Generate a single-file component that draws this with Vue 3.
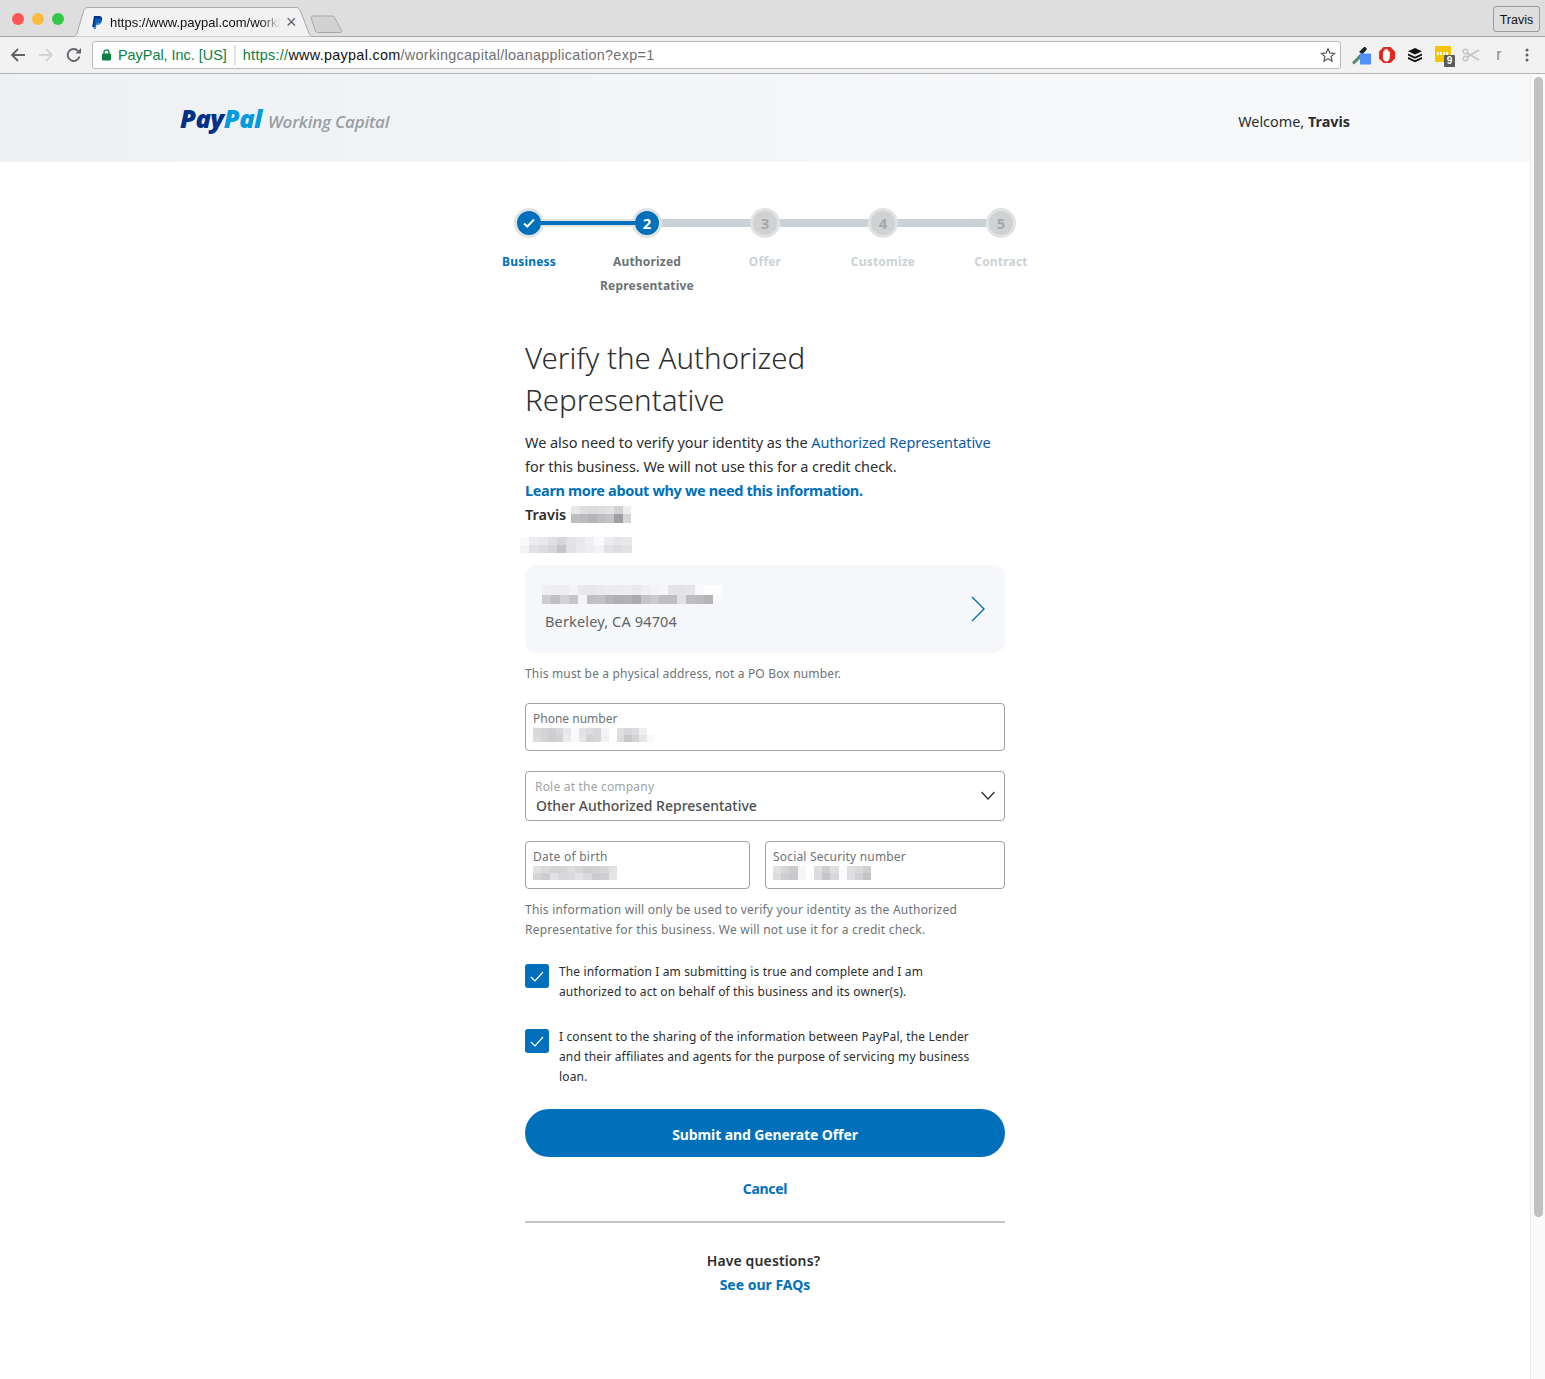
<script setup>
const steps = [
  { label: 'Business', state: 'done' },
  { label: 'Authorized Representative', state: 'current' },
  { label: 'Offer', n: 3, state: 'todo' },
  { label: 'Customize', n: 4, state: 'todo' },
  { label: 'Contract', n: 5, state: 'todo' }
]
const g = (v) => `rgb(${v},${v},${v + 2})`
const blurs = {
  surname: { w: 8.6, h: 8.5, rows: [[232,222,218,222,226,210,238],[190,186,180,190,196,160,214]] },
  email: { w: 9.3, h: 8, rows: [[250,236,232,224,214,226,232,240,250,236,230,232],[244,226,220,214,198,226,234,238,244,226,222,226]] },
  address: { w: 9, h: 9.5, rows: [[240,238,238,244,232,232,234,236,236,238,234,240,244,246,228,228,230,250,254,254],[206,192,210,198,244,192,194,182,176,178,170,196,202,190,190,226,190,188,180,250]] },
  phone: { w: 7.6, h: 7, rows: [[216,212,208,216,232,250,226,220,214,244,255,224,214,222,240],[220,212,206,210,236,250,230,210,214,240,255,220,200,212,230,250]] },
  dob: { w: 8.4, h: 7, rows: [[226,218,212,212,222,214,206,210,214,226],[214,206,226,216,218,226,218,204,206,228]] },
  ssn: { w: 8.2, h: 7, rows: [[226,214,204,246,255,222,206,224,252,224,218,208],[220,206,200,246,255,220,198,216,252,222,210,196]] }
}
const cell = (b, v) => ({ width: b.w + 'px', height: b.h + 'px', background: g(v) })
</script>

<template>
  <div class="root">
    <div class="titlebar">
      <div class="lights">
        <i class="light red"></i><i class="light yellow"></i><i class="light green"></i>
      </div>
      <div class="tab">
        <svg class="tab-shape" width="242" height="30" viewBox="0 0 242 30">
          <path d="M0 29.500h1c2 0 3-1 4-3L11.500 4c.7-2 2-3.500 4.500-3.500h208c2.500 0 3.800 1.500 4.500 3.500l8.500 22.500c1 2 2 3 4 3h1" fill="#f2f2f2" stroke="#a8a8a8"/>
        </svg>
        <svg class="favicon" width="12" height="13" viewBox="0 0 12 13">
          <path d="M3 0h5c2.500 0 3.500 1.500 3 3.800C10.500 6 9 7.200 6.800 7.200H5.200L4.400 11H1.200z" fill="#003087"/>
          <path d="M4.500 2.500h4.800c1.500.8 1.600 2.200 1.300 3.400-.5 2-2 3-4 3H5.500L4.800 13H2.400z" fill="#0a6fc2" opacity=".75"/>
        </svg>
        <span class="tab-title">https://www.paypal.com/worki</span>
        <span class="tab-x">×</span>
      </div>
      <svg class="newtab" width="36" height="20" viewBox="0 0 36 20">
        <path d="M2 2.500c0-1 .5-1.500 1.500-1.500h20c1 0 1.500.5 2 1.500l7 13c.5 1 0 2-1 2h-23c-1 0-1.500-.5-2-1.500z" fill="#d2d2d2" stroke="#a8a8a8"/>
      </svg>
      <div class="profile">Travis</div>
    </div>

    <div class="toolbar">
      <svg class="nav" width="16" height="16" viewBox="0 0 16 16"><path d="M15 8H2M8 2 2 8l6 6" fill="none" stroke="#5f6368" stroke-width="1.800"/></svg>
      <svg class="nav fwd" width="16" height="16" viewBox="0 0 16 16"><path d="M1 8h13M8 2l6 6-6 6" fill="none" stroke="#d3d3d3" stroke-width="1.800"/></svg>
      <svg class="nav reload" width="16" height="16" viewBox="0 0 16 16"><path d="M13.500 9.500A6 6 0 1 1 12 3.800" fill="none" stroke="#5f6368" stroke-width="1.800"/><path d="M9.500 6.500H15V1z" fill="#5f6368"/></svg>
      <div class="omnibox">
        <svg class="lock" width="9" height="12" viewBox="0 0 9 12"><path d="M2 5V3.300a2.500 2.500 0 0 1 5 0V5" fill="none" stroke="#0b8043" stroke-width="1.300"/><rect y="4.500" width="9" height="7" rx="1" fill="#0b8043"/></svg>
        <span class="ev">PayPal, Inc. [US]</span>
        <span class="sep"></span>
        <span class="url"><span class="ev">https://</span><span class="host">www.paypal.com</span>/workingcapital/loanapplication?exp=1</span>
        <svg class="star" width="16" height="16" viewBox="0 0 16 16"><path d="M8 1.800l1.900 4.200 4.600.5-3.400 3.100.9 4.500L8 11.800l-4 2.300.9-4.500-3.400-3.100 4.600-.5z" fill="none" stroke="#5f6368" stroke-width="1.300"/></svg>
      </div>
      <div class="exts">
        <svg width="20" height="20" viewBox="0 0 20 20"><path d="M0 17.500 8 9l2.500 2.500L2 19.500z" fill="#5b8a6c"/><path d="M7 6.500l3 3 3.500-3.500 1-1c1-1.500-1.500-4-3-2.500L8 6z" fill="#1d2426"/><rect x="8" y="8.500" width="11" height="11" fill="#4d90fe"/></svg>
        <svg width="18" height="18" viewBox="0 0 18 18"><path d="M5.500 1h7L17 5.500v7L12.500 17h-7L1 12.500v-7z" fill="#e02b20"/><path d="M5 6c0-1 1.200-1 1.300 0V4.200c0-1 1.300-1 1.300 0V3.500c0-1 1.400-1 1.400 0v.7c0-1 1.300-1 1.300 0V6c0-1 1.500-1 1.500 0v5c0 2.500-1.500 4.500-3.500 4.500S5 13.500 5 11z" fill="#fff"/></svg>
        <svg width="16" height="16" viewBox="0 0 16 16"><path d="M8 1l7 3.200-7 3.200-7-3.200z" fill="#111"/><path d="M1 6.500l7 3.200 7-3.200v2L8 11.700 1 8.500zM1 10l7 3.200 7-3.200v2l-7 3.200L1 12z" fill="#111"/></svg>
        <span class="yellow-ext"><span class="dots"><i></i><i></i><i></i><i></i></span><span class="badge">9</span></span>
        <svg width="18" height="16" viewBox="0 0 18 16"><path d="M5 10 17 3M5 6l12 7" stroke="#c4c4c4" stroke-width="1.800" fill="none"/><circle cx="3.500" cy="4.500" r="2.300" fill="none" stroke="#c4c4c4" stroke-width="1.500"/><circle cx="3.500" cy="11.500" r="2.300" fill="none" stroke="#c4c4c4" stroke-width="1.500"/></svg>
        <span class="ext-r">r</span>
        <svg width="4" height="14" viewBox="0 0 4 14"><circle cx="2" cy="2" r="1.500" fill="#5f6368"/><circle cx="2" cy="7" r="1.500" fill="#5f6368"/><circle cx="2" cy="12" r="1.500" fill="#5f6368"/></svg>
      </div>
    </div>

    <div class="viewport">
      <main class="page">
        <header class="hero">
          <div class="logo"><span class="pay">Pay</span><span class="pal">Pal</span><span class="wc">Working Capital</span></div>
          <div class="welcome">Welcome, <b>Travis</b></div>
        </header>

        <div class="stepper">
          <div class="track"><div class="track-done"></div></div>
          <div v-for="s in steps" :key="s.label" class="step" :class="s.state">
            <div class="circle">
              <svg v-if="s.state === 'done'" width="12" height="10" viewBox="0 0 12 10"><path d="M1 5.500 4.300 8.500 11 1.500" fill="none" stroke="#fff" stroke-width="2"/></svg>
              <template v-else-if="s.state === 'current'">2</template>
              <template v-else>{{ s.n }}</template>
            </div>
            <div class="step-label">{{ s.label }}</div>
          </div>
        </div>

        <section class="form">
          <h1>Verify the Authorized Representative</h1>
          <p class="lead">We also need to verify your identity as the <a class="lnk">Authorized Representative</a> for this business. We will not use this for a credit check.</p>
          <p class="lead"><a class="lnk strong learn">Learn more about why we need this information.</a></p>
          <div class="name"><b>Travis</b>
            <span class="blur"><span v-for="(r, i) in blurs.surname.rows" :key="i" class="blur-row"><i v-for="(v, j) in r" :key="j" :style="cell(blurs.surname, v)"></i></span></span>
          </div>
          <div class="email-row">
            <span class="blur"><span v-for="(r, i) in blurs.email.rows" :key="i" class="blur-row"><i v-for="(v, j) in r" :key="j" :style="cell(blurs.email, v)"></i></span></span>
          </div>

          <div class="addr">
            <div>
              <span class="blur addr-blur"><span v-for="(r, i) in blurs.address.rows" :key="i" class="blur-row"><i v-for="(v, j) in r" :key="j" :style="cell(blurs.address, v)"></i></span></span>
              <div class="city">Berkeley, CA 94704</div>
            </div>
            <svg width="16" height="26" viewBox="0 0 16 26"><path d="M2 1l12 12L2 25" fill="none" stroke="#0070ba" stroke-width="1.400"/></svg>
          </div>
          <p class="note po">This must be a physical address, not a PO Box number.</p>

          <div class="field phone">
            <label>Phone number</label>
            <span class="blur"><span v-for="(r, i) in blurs.phone.rows" :key="i" class="blur-row"><i v-for="(v, j) in r" :key="j" :style="cell(blurs.phone, v)"></i></span></span>
          </div>

          <div class="field role">
            <div>
              <label>Role at the company</label>
              <div class="value">Other Authorized Representative</div>
            </div>
            <svg width="16" height="10" viewBox="0 0 16 10"><path d="M1.500 1l6.500 7 6.500-7" fill="none" stroke="#2c2e2f" stroke-width="1.300"/></svg>
          </div>

          <div class="pair">
            <div class="field dob">
              <label>Date of birth</label>
              <span class="blur"><span v-for="(r, i) in blurs.dob.rows" :key="i" class="blur-row"><i v-for="(v, j) in r" :key="j" :style="cell(blurs.dob, v)"></i></span></span>
            </div>
            <div class="field ssn">
              <label>Social Security number</label>
              <span class="blur"><span v-for="(r, i) in blurs.ssn.rows" :key="i" class="blur-row"><i v-for="(v, j) in r" :key="j" :style="cell(blurs.ssn, v)"></i></span></span>
            </div>
          </div>

          <p class="note info">This information will only be used to verify your identity as the Authorized Representative for this business. We will not use it for a credit check.</p>

          <div class="check first">
            <span class="box"><svg width="14" height="11" viewBox="0 0 14 11"><path d="M1 6l4 4 8-9" fill="none" stroke="#fff" stroke-width="1.200"/></svg></span>
            <p>The information I am submitting is true and complete and I am authorized to act on behalf of this business and its owner(s).</p>
          </div>
          <div class="check second">
            <span class="box"><svg width="14" height="11" viewBox="0 0 14 11"><path d="M1 6l4 4 8-9" fill="none" stroke="#fff" stroke-width="1.200"/></svg></span>
            <p>I consent to the sharing of the information between PayPal, the Lender and their affiliates and agents for the purpose of servicing my business loan.</p>
          </div>

          <button class="submit">Submit and Generate Offer</button>
          <a class="cancel">Cancel</a>
          <hr />
          <div class="faq">
            <div class="q">Have questions?</div>
            <a class="lnk strong">See our FAQs</a>
          </div>
        </section>
      </main>
      <aside class="scrollbar"><div class="thumb"></div></aside>
    </div>
  </div>
</template>

<style>
html, body { margin: 0; background: #fff; }
</style>

<style scoped>
.root { width: 1545px; height: 1379px; overflow: hidden; display: flex; flex-direction: column; font-family: "Noto Sans", "Open Sans", sans-serif; color: #2c2e2f; }
.titlebar { height: 37px; flex: none; box-sizing: border-box; background: #dedede; border-bottom: 1px solid #a8a8a8; display: flex; position: relative; }
.lights { display: flex; gap: 8px; padding: 13px 0 0 12px; width: 60px; box-sizing: content-box; }
.light { width: 12px; height: 12px; border-radius: 50%; display: block; }
.light.red { background: #fc5753; }
.light.yellow { background: #fdbc40; }
.light.green { background: #33c748; }
.tab { position: relative; width: 242px; height: 30px; margin-top: 7px; display: flex; align-items: center; font: 13px "Liberation Sans", Arial, sans-serif; color: #111; z-index: 1; }
.tab-shape { position: absolute; left: 0; top: 0; }
.favicon { position: relative; margin-left: 19px; }
.tab-title { position: relative; margin-left: 7px; white-space: nowrap; -webkit-mask-image: linear-gradient(90deg, #000 88%, transparent 100%); mask-image: linear-gradient(90deg, #000 88%, transparent 100%); }
.tab-x { position: absolute; left: 214px; top: 6px; font-size: 18px; line-height: 18px; color: #5f6368; }
.newtab { margin: 15px 0 0 -5px; }
.profile { position: absolute; left: 1493px; top: 6px; width: 47px; height: 26px; box-sizing: border-box; border: 1px solid #9a9a9a; border-radius: 3px; font: 12.500px/26px "Liberation Sans", Arial, sans-serif; text-align: center; color: #111; }
.toolbar { height: 37px; flex: none; box-sizing: border-box; background: #f2f2f2; border-bottom: 1px solid #b4b4b4; display: flex; align-items: center; position: relative; }
.nav { margin-left: 10px; }
.nav.fwd { margin-left: 12px; }
.nav.reload { margin-left: 12px; }
.omnibox { margin-left: 10px; width: 1249px; height: 28px; box-sizing: border-box; background: #fff; border: 1px solid #bcbcbc; border-radius: 3px; display: flex; align-items: center; padding-left: 9px; font: 14.400px "Liberation Sans", Arial, sans-serif; margin-top: -1px; }
.lock { margin-right: 7px; }
.ev { color: #0b8043; }
.sep { width: 1px; height: 20px; background: #dcdcdc; margin: 0 7px; border-right: 1px solid #e8e8e8; }
.url { color: #707070; white-space: nowrap; letter-spacing: 0.300px; }
.host { color: #111; }
.star { margin-left: auto; margin-right: 4px; }
.exts { display: grid; grid-template-columns: repeat(7, 28px); justify-items: center; align-items: center; position: absolute; left: 1345px; top: 6px; height: 24px; }
.exts svg:first-child { margin-left: 6px; }
.yellow-ext { position: relative; width: 16px; height: 16px; background: #f7c600; border-radius: 1px; margin-top: -2px; }
.dots { position: absolute; left: 2px; top: 6px; display: flex; gap: 1px; }
.dots i { display: block; width: 2px; height: 3px; background: #fff; }
.badge { position: absolute; left: 9px; top: 9px; width: 11px; height: 12px; background: #5a5a5a; color: #fff; font: bold 10px/12px "Liberation Sans", sans-serif; text-align: center; border-radius: 1px; }
.ext-r { font: 16px "Liberation Sans", sans-serif; color: #8c8c8c; }
.viewport { flex: 1; display: flex; min-height: 0; }
.page { flex: 1; min-width: 0; }
.scrollbar { width: 15px; flex: none; background: #fafafa; border-left: 1px solid #ececec; box-sizing: border-box; padding: 3px 2px 0 3px; }
.thumb { height: 1140px; background: #c1c1c1; border-radius: 5px; }
.hero { height: 88px; box-sizing: border-box; padding: 0 180px; background: linear-gradient(90deg, #eef1f4, #f6f8fa 70%, #f6f8fa); display: flex; align-items: center; justify-content: space-between; }
.logo { font-family: "Open Sans", sans-serif; font-style: italic; display: flex; align-items: baseline; margin-top: -1px; }
.pay, .pal { font-weight: 800; font-size: 25.500px; letter-spacing: -0.500px; }
.pay { color: #003087; }
.pal { color: #009cde; }
.wc { color: #9a9ea2; font-size: 17px; font-weight: 600; margin-left: 6px; letter-spacing: -0.200px; }
.welcome { font-size: 14.400px; line-height: 24px; color: #2c2e2f; margin-top: 8px; }
.stepper { width: 590px; margin: 46px auto 0; display: grid; grid-template-columns: repeat(5, 118px); position: relative; }
.track { position: absolute; left: 59px; right: 59px; top: 11px; height: 8px; background: #cbd2d6; }
.track-done { position: relative; z-index: 1; margin-left: 12px; width: 94px; height: 8px; box-sizing: border-box; background: #0070ba; border-top: 2px solid #e1e2e3; border-bottom: 2px solid #e1e2e3; }
.step { display: flex; flex-direction: column; align-items: center; position: relative; }
.circle { width: 30px; height: 30px; box-sizing: border-box; border-radius: 50%; border: 3px solid #e1e2e3; display: flex; align-items: center; justify-content: center; font-weight: 700; font-size: 15px; }
.done .circle, .current .circle { background: #0070ba; color: #fff; }
.todo .circle { background: #d0d1d2; color: #a5a7a9; }
.step-label { margin-top: 12px; text-align: center; width: 100px; font-size: 12px; line-height: 24px; font-weight: 700; color: #cbd2d6; letter-spacing: 0.200px; }
.done .step-label { color: #0070ba; }
.current .step-label { color: #6c7378; }
.form { width: 480px; margin: 39px auto 0; }
h1 { margin: 0 0 9px; font-size: 29.500px; line-height: 42px; font-weight: 300; color: #2c2e2f; width: 340px; }
.lead { margin: 0; width: 480px; font-size: 14.500px; line-height: 24px; letter-spacing: -0.055px; }
.lnk { color: #0a5aa8; text-decoration: none; }
.strong { font-weight: 700; color: #0070ba; }
.learn { letter-spacing: -0.350px; }
.name { display: flex; align-items: center; gap: 5px; height: 24px; font-size: 14.500px; }
.name b { font-weight: 600; }
.blur { display: block; width: max-content; filter: blur(0.500px); }
.blur-row { display: flex; }
.blur-row i { display: block; flex: none; }
.email-row { height: 27px; padding: 11px 0 0; box-sizing: border-box; margin: 0 0 0 -5px; }
.addr { margin-top: 12px; height: 88px; box-sizing: border-box; background: #f5f7fa; border-radius: 12px; padding: 20px 19px 0 17px; display: flex; justify-content: space-between; align-items: flex-start; }
.addr svg { margin-top: 11px; }
.city { font-size: 14.500px; line-height: 24px; color: #5f6468; margin: 5px 0 0 3px; letter-spacing: 0.150px; }
.note { margin: 0; font-size: 12px; line-height: 20px; color: #6c7378; }
.po { margin-top: 11px; letter-spacing: 0.170px; }
.field { box-sizing: border-box; border: 1px solid #9da3a6; border-radius: 4px; background: #fff; padding: 6px 7px 0; height: 48px; }
.field label { display: block; font-size: 12px; line-height: 17px; color: #6c7378; }
.field > .blur { margin-top: 1px; }
.phone { margin-top: 19px; }
.role { margin-top: 20px; height: 50px; padding: 6px 8px 0 9px; display: flex; justify-content: space-between; align-items: center; }
.role > div { align-self: flex-start; }
.role label { color: #9da3a6; line-height: 17px; letter-spacing: 0.200px; }
.role svg { margin-top: -6px; }
.value { font-size: 14px; line-height: 19px; color: #4a4f52; font-weight: 500; margin: 1px 0 0 1px; }
.pair { display: flex; gap: 15px; margin-top: 20px; }
.dob { width: 225px; flex: none; }
.ssn { width: 240px; flex: none; }
.dob label { letter-spacing: 0.250px; }
.ssn label { letter-spacing: 0.180px; }
.info { margin-top: 11px; letter-spacing: 0.220px; }
.check { display: flex; gap: 10px; font-size: 12px; line-height: 20px; color: #2c2e2f; letter-spacing: 0.140px; }
.check p { margin: 1px 0 0; flex: 1; }
.first { margin-top: 21px; padding-right: 40px; }
.second { margin-top: 24px; padding-right: 26px; }
.box { width: 24px; height: 24px; margin-top: 3px; flex: none; border-radius: 3px; background: #0070ba; display: flex; align-items: center; justify-content: center; }
.submit { display: block; width: 480px; height: 48px; margin-top: 22px; padding: 2px 0 0; border: 0; border-radius: 24px; background: #0070ba; color: #fff; font: 700 14px "Noto Sans", sans-serif; letter-spacing: -0.100px; }
.cancel { display: block; margin-top: 20px; text-align: center; font-size: 14px; line-height: 24px; font-weight: 700; color: #0070ba; letter-spacing: -0.300px; }
hr { margin: 20px 0 0; border: 0; height: 2px; background: #c4c6c8; }
.faq { margin-top: 26px; text-align: center; font-size: 14px; line-height: 24px; }
.q { font-weight: 600; color: #2c2e2f; letter-spacing: 0.130px; margin-right: 3px; }
.faq .lnk { display: block; }
</style>
